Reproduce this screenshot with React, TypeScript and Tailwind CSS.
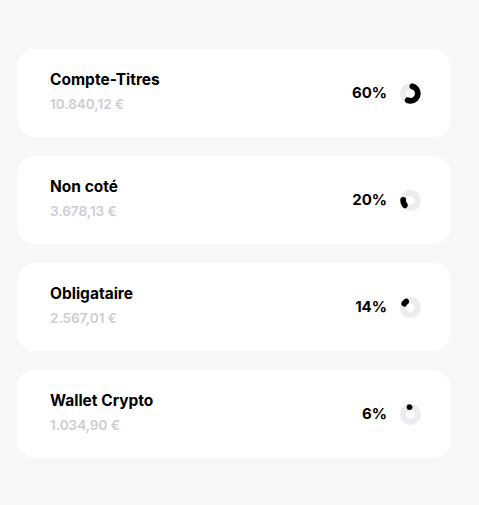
import React from "react";

type Item = { name: string; amount: string; pct: number; start: number };

const items: Item[] = [
  { name: "Compte-Titres", amount: "10.840,12 €", pct: 60, start: 0 },
  { name: "Non coté", amount: "3.678,13 €", pct: 20, start: 60 },
  { name: "Obligataire", amount: "2.567,01 €", pct: 14, start: 80 },
  { name: "Wallet Crypto", amount: "1.034,90 €", pct: 6, start: 94 },
];

function Donut({ pct, start }: { pct: number; start: number }) {
  const r = 7;
  const c = 2 * Math.PI * r;
  const len = (pct / 100) * c;
  const rot = -90 + (start / 100) * 360;
  return (
    <svg width="21" height="21" viewBox="0 0 20 20">
      <circle cx="10" cy="10" r={r} fill="none" stroke="#ececf0" strokeWidth="6" />
      <circle
        cx="10"
        cy="10"
        r={r}
        fill="none"
        stroke="#000"
        strokeWidth="5.5"
        strokeLinecap="round"
        strokeDasharray={`${Math.max(len - 3.5, 0.01)} ${c}`}
        strokeDashoffset={-1.75}
        transform={`rotate(${rot} 10 10)`}
      />
    </svg>
  );
}

export default function App() {
  return (
    <div
      className="w-[479px] h-[505px] bg-[#f7f7f7] pt-[49px] pl-[17px] pr-[28px] flex flex-col gap-[19px]"
      style={{ fontFamily: "Inter, 'Noto Sans', sans-serif" }}
    >
      {items.map((it) => (
        <div
          key={it.name}
          className="h-[88px] bg-white rounded-[18px] flex items-center justify-between pl-[33px] pr-[30px]"
        >
          <div className="flex flex-col mb-[4px]">
            <div className="text-[15.5px] leading-[20px] font-bold text-black">
              {it.name}
            </div>
            <div className="text-[13.5px] leading-[18px] font-semibold text-[#cbcdd5] mt-[5px]">
              {it.amount}
            </div>
          </div>
          <div className="flex items-center gap-[13px]">
            <div className="text-[15px] font-bold text-black">{it.pct}%</div>
            <Donut pct={it.pct} start={it.start} />
          </div>
        </div>
      ))}
    </div>
  );
}
